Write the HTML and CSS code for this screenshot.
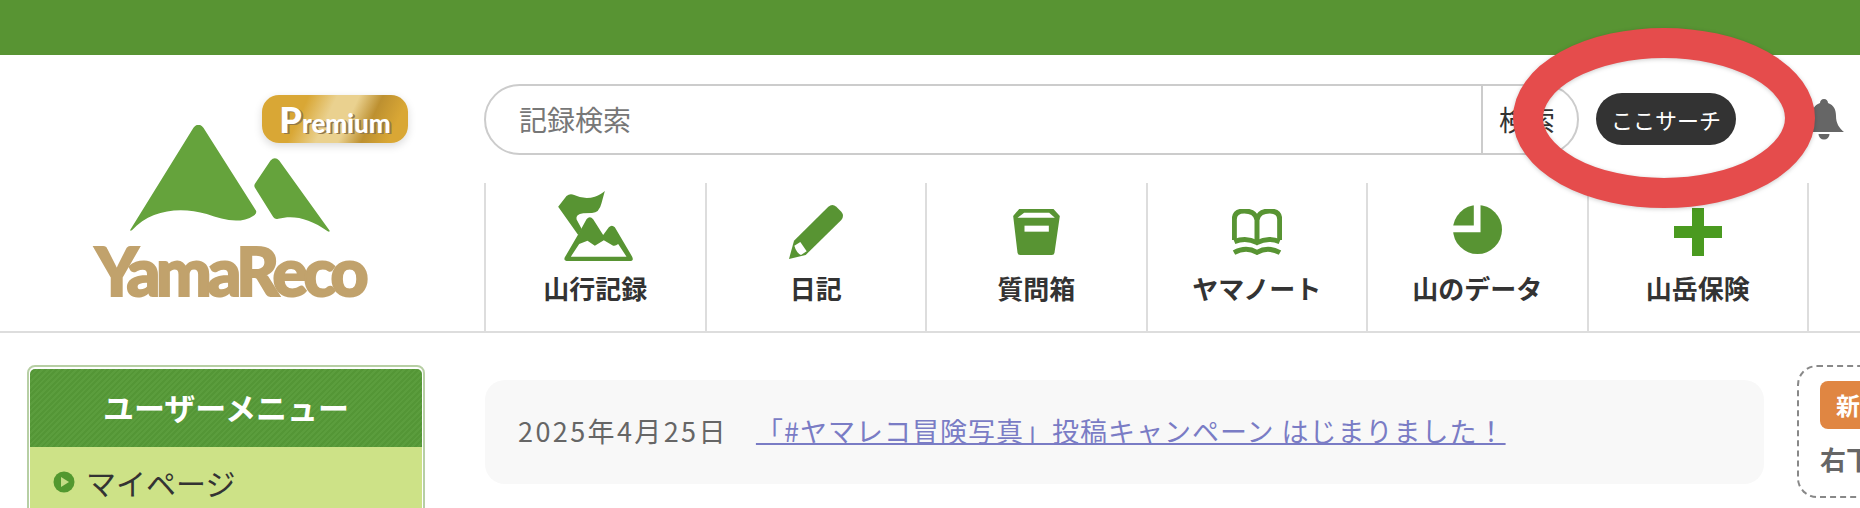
FILE: index.html
```html
<!DOCTYPE html>
<html lang="ja">
<head>
	<meta charset="utf-8">
	<title>YamaReco</title>
	<link rel="stylesheet" href="styles.css">
</head>
<body>
	<div class="top_bar"></div>
	<div class="header">
		<div class="logo">
			<svg class="logo_mark" viewBox="390 225 600 322">
				<path d="M390 540L580 233Q595 215 610 233L768 482Q772 490 762 497C720 525 670 510 620 493C540 470 450 480 395 542Q388 545 390 540Z"/>
				<path d="M765 402L812 332Q825 318 838 332L990 543Q990 548 984 545C930 505 880 495 835 507Q826 510 820 502L766 415Q761 408 765 402Z"/>
			</svg>
			<div class="logo_text">YamaReco</div>
			<div class="premium">Premium</div>
		</div>
		<div class="head_main">
			<div class="search_row">
				<form class="search">
					<input class="search_input" type="text" placeholder="記録検索">
					<button class="search_button" type="button">検索</button>
				</form>
				<button class="here_search" type="button">ここサーチ</button>
				<svg class="bell" viewBox="0 0 40 41">
					<path d="M20 0C17.5 0 16 2 16 4C10 6 8 11 8 17C8 24 5 29 0 33H40C35 29 32 24 32 17C32 11 30 6 24 4C24 2 22.500 0 20 0Z"/>
					<path d="M14.500 35H25.500A5.500 5.500 0 0 1 14.500 35Z"/>
				</svg>
			</div>
			<div class="nav">
				<a class="nav_item">
					<span class="nav_icon">
						<svg class="icon_flag" viewBox="60 33 224 210">
							<path d="M60 80L85 48Q95 40 108 45Q140 60 170 50Q190 43 200 33L190 70Q183 100 160 99L135 100Q112 103 115 118L131 148L120 165Z"/>
							<path fill-rule="evenodd" d="M80 232L122 160L145 118Q155 105 165 118L195 165L212 142Q221 133 230 142L282 230Q288 243 275 243H90Q75 243 80 232ZM98 230H265L240 192Q232 199 225 197L197 181L170 197L148 182L123 192Z"/>
						</svg>
					</span>
					<span class="nav_label">山行記録</span>
				</a>
				<a class="nav_item">
					<span class="nav_icon">
						<svg class="icon_pen" viewBox="750 75 162 162">
							<path d="M765 182L868 80Q880 70 892 80L907 95Q917 107 907 120L800 225L750 237Z"/>
							<path class="cut" d="M766 197L784 186L803 214L786 225Q772 218 766 197Z"/>
						</svg>
					</span>
					<span class="nav_label">日記</span>
				</a>
				<a class="nav_item">
					<span class="nav_icon">
						<svg class="icon_box" viewBox="97 57 140 138">
							<path d="M115 57H218L237 78L221 188Q220 195 213 195H118Q111 195 110 188L97 78Z"/>
							<path class="cut" d="M130 68H205L222 83H110Z"/>
							<rect class="cut" x="131" y="107" width="73" height="18"/>
						</svg>
					</span>
					<span class="nav_label">質問箱</span>
				</a>
				<a class="nav_item">
					<span class="nav_icon">
						<svg class="icon_book" viewBox="753 57 150 138">
							<path class="line" d="M760 150V88Q760 63 790 63Q822 63 828 88Q834 63 866 63Q896 63 896 88V150"/>
							<path class="line" d="M828 88V156"/>
							<path class="line" d="M760 155Q795 140 828 158Q861 140 896 155"/>
							<path class="line" d="M759 188Q795 168 828 187Q861 168 897 188"/>
						</svg>
					</span>
					<span class="nav_label">ヤマノート</span>
				</a>
				<a class="nav_item">
					<span class="nav_icon">
						<svg class="icon_pie" viewBox="160 44 146 146">
							<circle cx="233" cy="117" r="73"/>
							<path class="cut" d="M222 40H242V125H155V105H222Z"/>
						</svg>
					</span>
					<span class="nav_label">山のデータ</span>
				</a>
				<a class="nav_item">
					<span class="nav_icon">
						<span class="icon_plus"></span>
					</span>
					<span class="nav_label">山岳保険</span>
				</a>
				<a class="nav_item"></a>
			</div>
		</div>
	</div>
	<div class="content">
		<div class="side_menu">
			<div class="side_head">ユーザーメニュー</div>
			<div class="side_list">
				<svg class="bullet" viewBox="0 0 22 22">
					<circle cx="11" cy="11" r="10.500"/>
					<path class="tri" d="M8 6L16 11L8 16Z"/>
				</svg>
				<span>マイページ</span>
			</div>
		</div>
		<div class="news">
			<span class="news_date">2025年4月25日</span>
			<a class="news_link">「#ヤマレコ冒険写真」投稿キャンペーン はじまりました！</a>
		</div>
		<div class="notice">
			<span class="notice_badge">新着</span>
			<div class="notice_text">右下のボタン</div>
		</div>
	</div>
	<svg class="mark_ring" viewBox="0 0 302 180">
		<ellipse cx="151" cy="90" rx="136" ry="75"/>
	</svg>
</body>
</html>
```

FILE: styles.css
```css
*{
	box-sizing: border-box;
	margin: 0px;
	padding: 0px;
}
html, body
{
	height: 508px;
	overflow: hidden;
}
body
{
	position: relative;
	width: 1860px;
	background-color: #fff;
	color: #333;
	font-family: "Noto Sans CJK JP", "Noto Sans", sans-serif;
}
.top_bar
{
	height: 55px;
	background-color: #589433;
}
.header
{
	display: flex;
	height: 278px;
	border-bottom: 2px solid #ddd;
}
.logo
{
	position: relative;
	flex: 0 0 484px;
}
.logo_mark
{
	display: block;
	width: 200px;
	height: 107px;
	margin: 70px 0px 0px 130px;
	fill: #65a33c;
}
.logo_text
{
	margin: 6px 0px 0px 95px;
	height: 66px;
	color: #c1a26c;
	font-family: Lato, sans-serif;
	font-size: 66px;
	font-weight: 900;
	line-height: 66px;
	letter-spacing: -4.300px;
	white-space: nowrap;
	-webkit-text-stroke: 2px #c1a26c;
}
.premium
{
	position: absolute;
	top: 40px;
	left: 262px;
	width: 146px;
	height: 48px;
	border-radius: 17px;
	background: linear-gradient(115deg, #d9a735 0%, #d9a735 28%, #ead18f 45%, #ead18f 58%, #bd9030 72%, #d9a735 88%);
	box-shadow: 0px 3px 8px rgba(0, 0, 0, 0.15);
	color: #fff;
	font-family: Lato, sans-serif;
	font-size: 26px;
	font-weight: 900;
	line-height: 48px;
	text-align: center;
	text-shadow: 2px 1px 0px #94794a;
}
.premium::first-letter
{
	font-size: 36px;
}
.head_main
{
	flex: 1;
	min-width: 0px;
}
.search_row
{
	display: flex;
	align-items: center;
	height: 128px;
}
.search
{
	display: flex;
	flex: 0 0 1095px;
	height: 71px;
	border: 2px solid #ccc;
	border-radius: 36px;
}
.search_input
{
	flex: 1;
	min-width: 0px;
	padding-left: 33px;
	border: none;
	outline: none;
	background: none;
	color: #333;
	font-family: inherit;
	font-size: 28px;
}
.search_input::placeholder
{
	color: #777;
}
.search_button
{
	flex: 0 0 96px;
	padding-right: 6px;
	border: none;
	border-left: 2px solid #ccc;
	background: none;
	color: #333;
	font-family: inherit;
	font-size: 28px;
}
.here_search
{
	flex: 0 0 140px;
	height: 52px;
	margin-left: 17px;
	border: none;
	border-radius: 26px;
	background-color: #333;
	color: #fff;
	font-family: inherit;
	font-size: 22px;
}
.bell
{
	flex: 0 0 40px;
	height: 41px;
	margin-left: 68px;
	fill: #666;
}
.nav
{
	display: flex;
	height: 148px;
}
.nav_item
{
	flex: 0 0 220.500px;
	display: flex;
	flex-direction: column;
	align-items: center;
	padding-top: 7px;
	border-left: 2px solid #ddd;
}
.nav_icon
{
	display: flex;
	align-items: center;
	justify-content: center;
	height: 84px;
}
.nav_label
{
	margin-top: -2px;
	font-size: 26px;
	font-weight: bold;
	line-height: 32px;
}
.nav_icon svg
{
	display: block;
	fill: #589433;
}
.nav_icon .cut
{
	fill: #fff;
}
.nav_icon .line
{
	fill: none;
	stroke: #589433;
	stroke-width: 15;
}
.icon_flag
{
	width: 75px;
	height: 70px;
	margin-bottom: 12px;
}
.icon_pen
{
	width: 54px;
	height: 54px;
}
.icon_box
{
	width: 47px;
	height: 46px;
}
.icon_book
{
	width: 50px;
	height: 46px;
}
.icon_pie
{
	width: 49px;
	height: 49px;
	margin-bottom: 6px;
}
.icon_plus
{
	display: block;
	width: 48px;
	height: 48px;
	background:
		linear-gradient(#4a9a20, #4a9a20) center / 12px 48px no-repeat,
		linear-gradient(#4a9a20, #4a9a20) center / 48px 12px no-repeat;
}
.content
{
	display: flex;
	align-items: flex-start;
	padding: 32px 0px 0px 27px;
}
.side_menu
{
	flex: 0 0 398px;
	padding: 2px 1px;
	border: 2px solid #b7cfa4;
	border-radius: 8px;
}
.side_head
{
	height: 78px;
	border-radius: 5px 5px 0px 0px;
	background: repeating-linear-gradient(-45deg, #549636, #549636 2px, #5b9d3d 2px, #5b9d3d 4px);
	color: #fff;
	font-size: 31px;
	font-weight: bold;
	line-height: 76px;
	text-align: center;
}
.side_list
{
	display: flex;
	align-items: center;
	gap: 11px;
	height: 90px;
	padding: 0px 0px 20px 23px;
	background-color: #cde287;
	font-size: 30px;
}
.bullet
{
	flex: 0 0 22px;
	height: 22px;
	fill: #52982f;
}
.bullet .tri
{
	fill: #c5dc86;
}
.news
{
	display: flex;
	align-items: center;
	flex: 0 0 1279px;
	height: 104px;
	margin: 15px 0px 0px 60px;
	padding: 0px 0px 4px 33px;
	border-radius: 20px;
	background-color: #f8f8f8;
	font-size: 27px;
}
.news_date
{
	color: #666;
	letter-spacing: 2.400px;
}
.news_link
{
	margin-left: 28px;
	color: #7a7cc5;
	letter-spacing: 1px;
	text-decoration: underline;
	text-decoration-thickness: 2px;
}
.notice
{
	flex: 0 0 340px;
	height: 133px;
	margin-left: 33px;
	padding: 14px 0px 0px 21px;
	border: 2px dashed #888;
	border-radius: 20px;
}
.notice_badge
{
	display: inline-block;
	height: 48px;
	padding: 0px 16px;
	border-radius: 8px;
	background-color: #e08642;
	color: #fff;
	font-size: 24px;
	font-weight: bold;
	line-height: 48px;
}
.notice_text
{
	margin-top: 14px;
	color: #666;
	font-size: 26px;
	font-weight: bold;
	line-height: 32px;
}
.mark_ring
{
	position: absolute;
	top: 28px;
	left: 1513px;
	width: 302px;
	height: 180px;
	filter: drop-shadow(0px 1px 2px rgba(0, 0, 0, 0.2));
}
.mark_ring ellipse
{
	fill: none;
	stroke: #e54c4c;
	stroke-width: 30;
}
```
